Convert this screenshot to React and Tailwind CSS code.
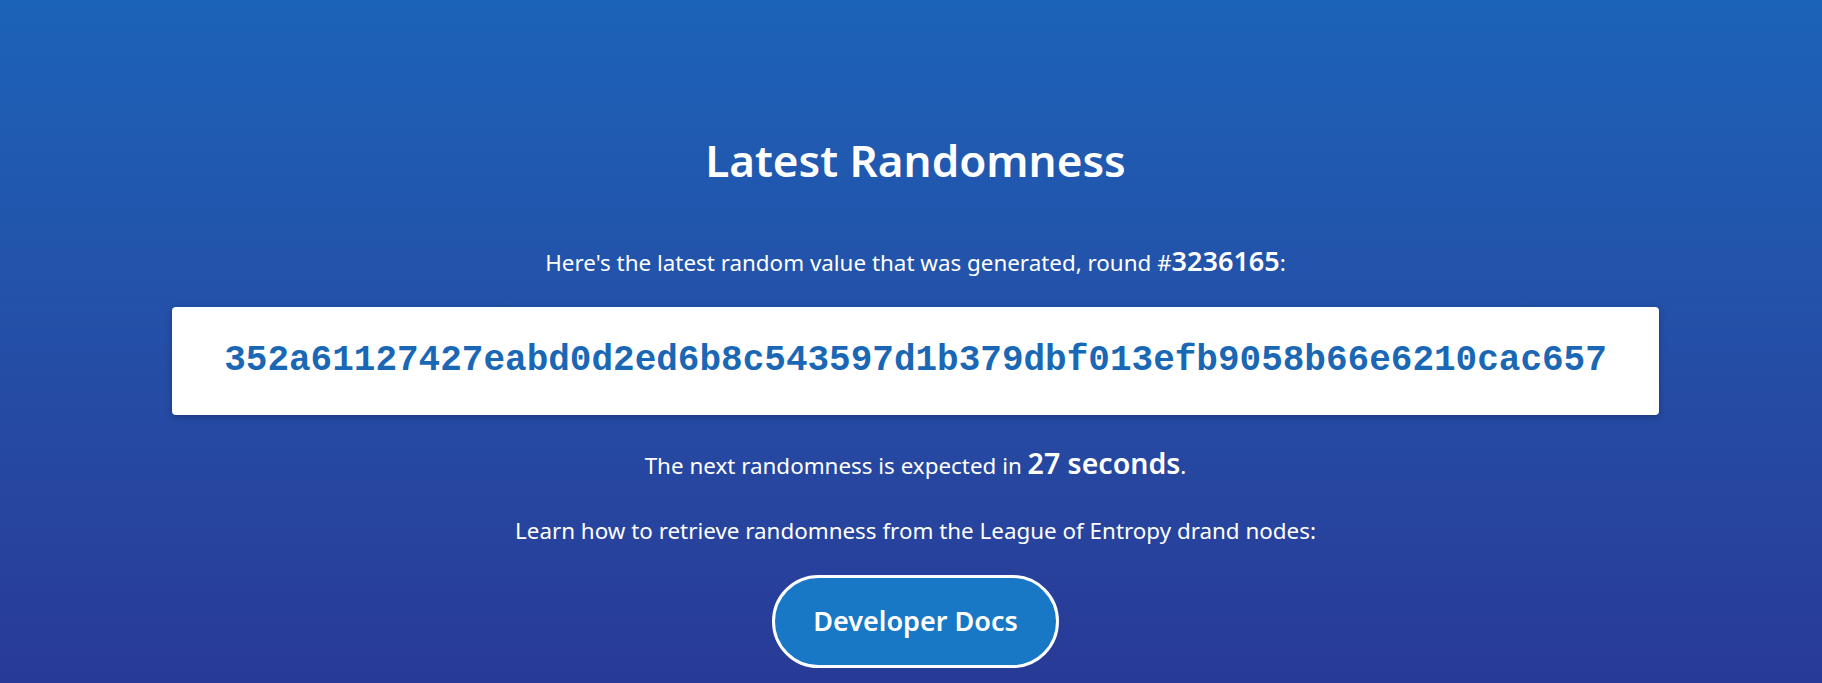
export default function App() {
  const round = 3236165;
  const randomness = '352a61127427eabd0d2ed6b8c543597d1b379dbf013efb9058b66e6210cac657';
  const seconds = 27;

  return (
    <div
      className="min-h-[683px] w-full bg-gradient-to-b from-[#1b63b8] to-[#283a96] text-white flex flex-col items-center pt-[133px] pb-[17px] pl-[9px]"
      style={{ fontFamily: '"Noto Sans", "Open Sans", sans-serif' }}
    >
      <h1 className="text-[44px] leading-[54px] font-semibold">Latest Randomness</h1>

      <p className="mt-[59px] text-[22.4px] leading-[30px]">
        Here's the latest random value that was generated, round #
        <span className="text-[27px] font-semibold">{round}</span>:
      </p>

      <div className="mt-[29px] w-[1487px] h-[108px] bg-white rounded-[4px] shadow-[0_2px_6px_rgba(0,0,0,0.25)] flex items-center justify-center">
        <span
          className="text-[36px] font-bold text-[#1a68b5]"
          style={{ fontFamily: '"Liberation Mono", "Courier New", monospace' }}
        >
          {randomness}
        </span>
      </div>

      <p className="mt-[33px] text-[22.4px] leading-[30px]">
        The next randomness is expected in{' '}
        <span className="text-[28.5px] font-semibold">{seconds} seconds</span>.
      </p>

      <p className="mt-[35px] text-[22.4px] leading-[30px]">
        Learn how to retrieve randomness from the League of Entropy drand nodes:
      </p>

      <a
        href="#"
        className="mt-[29px] w-[287px] h-[93px] rounded-full border-[3px] border-white bg-[#1878c6] flex items-center justify-center text-[27px] font-semibold text-white"
      >
        Developer Docs
      </a>
    </div>
  );
}
